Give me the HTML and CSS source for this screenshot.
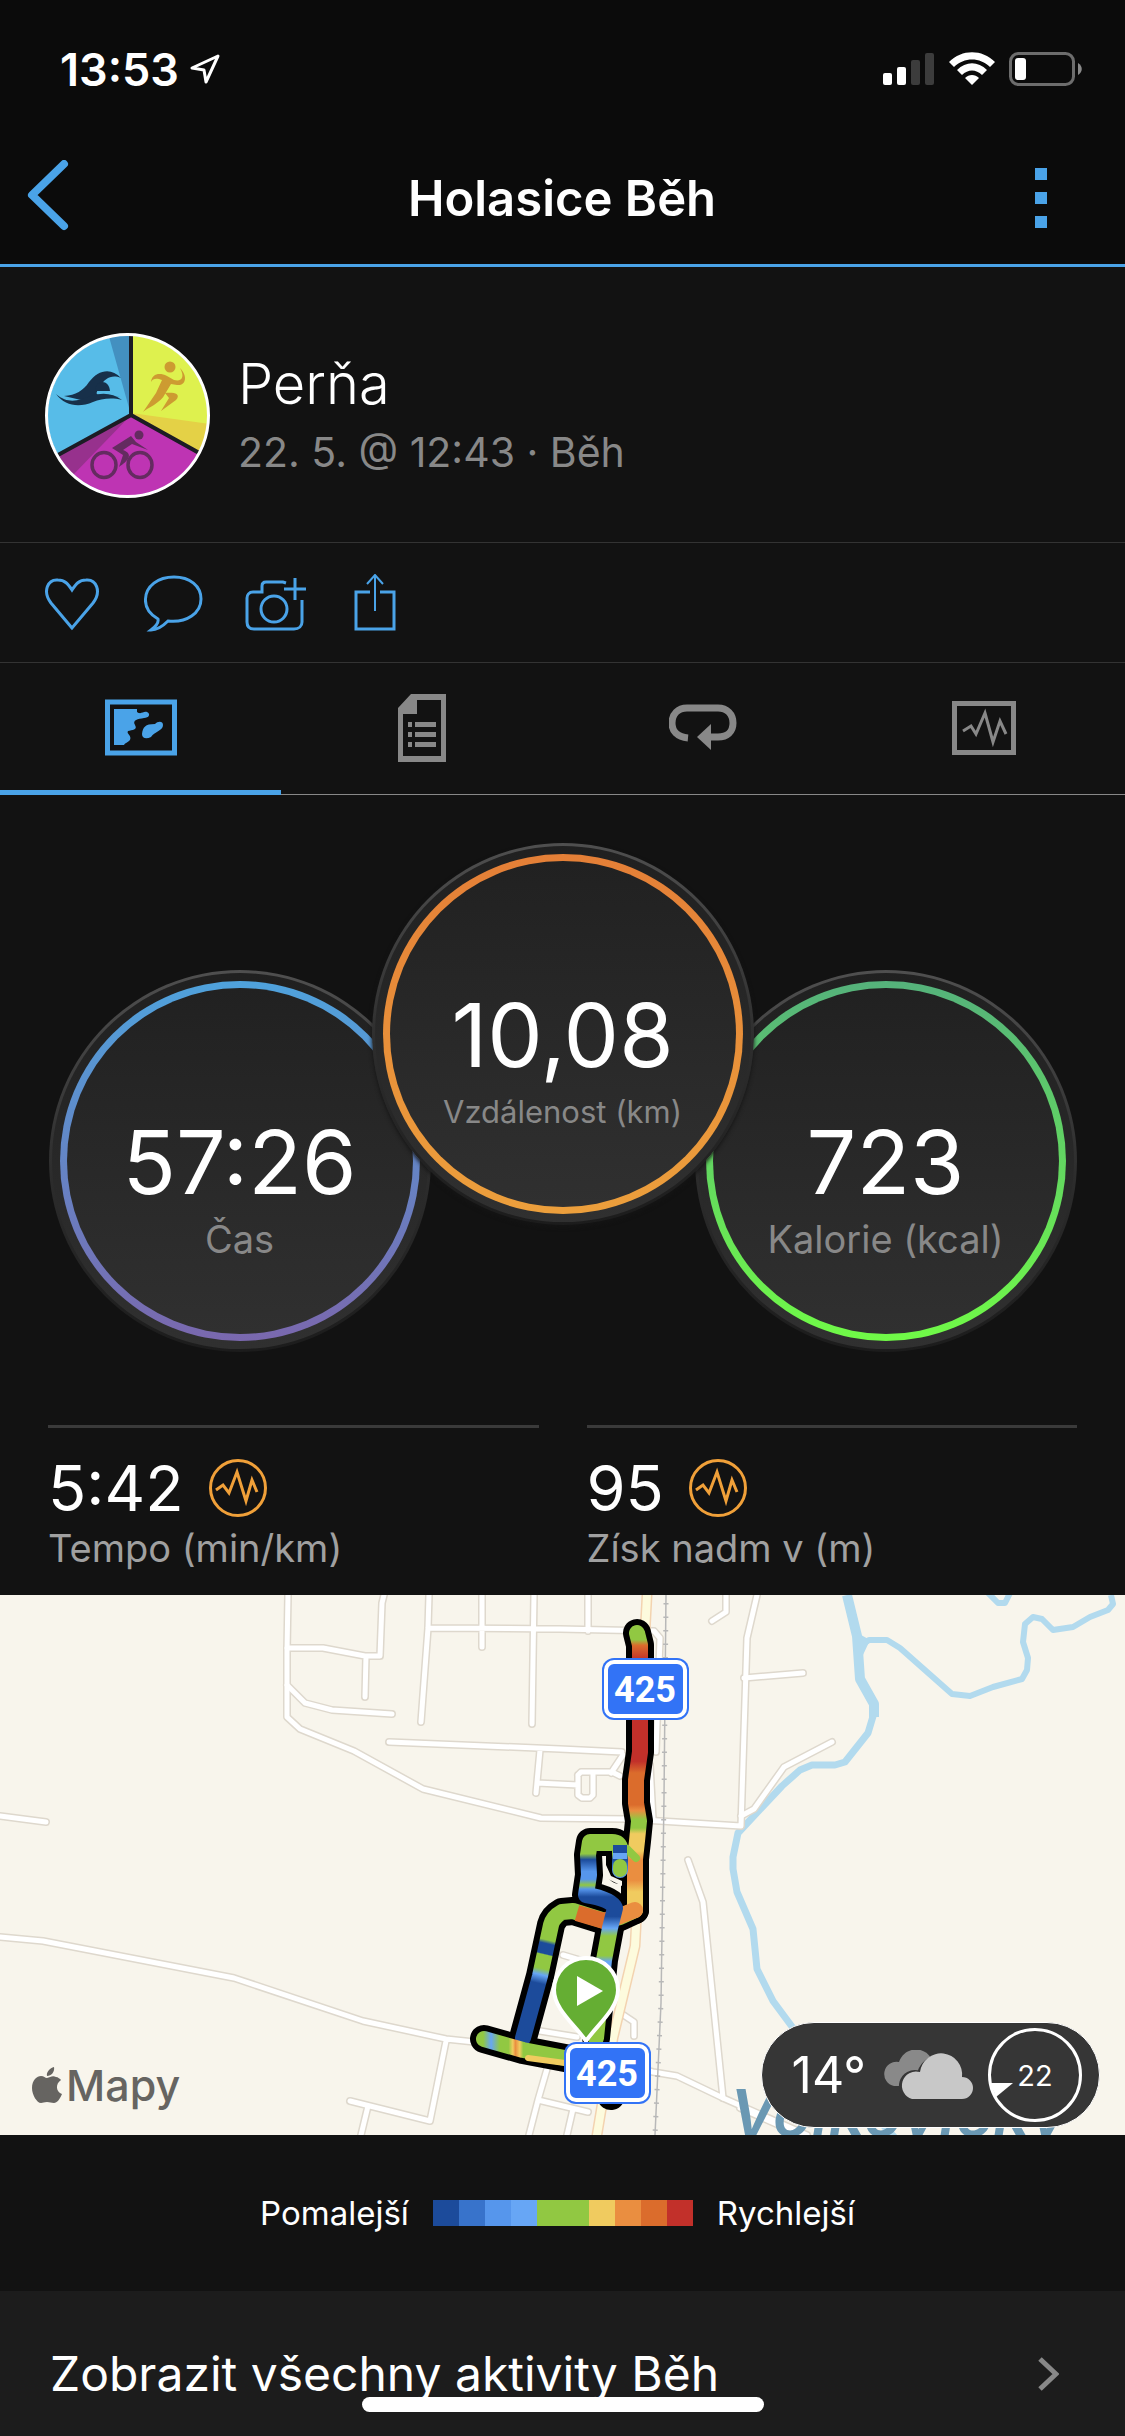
FILE: index.html
```html
<!DOCTYPE html>
<html lang="cs">
<head>
    <meta charset="UTF-8">
    <meta name="viewport" content="width=device-width, initial-scale=1.0">
    <title>Holasice Běh</title>
    <link rel="stylesheet" href="styles.css">
</head>
<body>
    <header class="top">
        <div class="status-bar">
            <span class="clock">13:53</span>
            <svg class="location" width="32" height="32" viewBox="0 0 32 32"><path d="M29 3 L3 15 L15 17 L17 29 Z"/></svg>
            <div class="status-icons">
                <svg width="52" height="34" viewBox="0 0 52 34">
                    <rect x="0" y="21" width="9" height="12" rx="2" fill="#fff"/>
                    <rect x="14" y="15" width="9" height="18" rx="2" fill="#fff"/>
                    <rect x="28" y="8" width="9" height="25" rx="2" fill="#3c3c3c"/>
                    <rect x="42" y="1" width="9" height="32" rx="2" fill="#3c3c3c"/>
                </svg>
                <svg width="46" height="34" viewBox="0 0 46 34" fill="#fff">
                    <path d="M0 10 C13 -3 33 -3 46 10 L41 15 C31 5 15 5 5 15 Z"/>
                    <path d="M8 18 C17 9 29 9 38 18 L33 23 C27 17 19 17 13 23 Z"/>
                    <path d="M16 26 C20 22 26 22 30 26 L23 33 Z"/>
                </svg>
                <svg width="73" height="34" viewBox="0 0 73 34">
                    <rect x="1.500" y="1.500" width="63" height="31" rx="8" fill="none" stroke="#6d6d6d" stroke-width="3"/>
                    <rect x="6" y="6" width="11" height="22" rx="3" fill="#fff"/>
                    <path d="M69 11 C74 14 74 20 69 23 Z" fill="#8a8a8a"/>
                </svg>
            </div>
        </div>
        <nav class="nav-bar">
            <button class="icon-button" aria-label="Zpět">
                <svg width="42" height="76" viewBox="0 0 42 76"><path d="M37 4 L5 35 L37 66" fill="none" stroke="#4aa3e8" stroke-width="8" stroke-linecap="round" stroke-linejoin="round"/></svg>
            </button>
            <h1>Holasice Běh</h1>
            <button class="icon-button more" aria-label="Více">
                <svg width="12" height="60" viewBox="0 0 12 60" fill="#4aa3e8"><path d="M0 0h12v12H0zM0 24h12v12H0zM0 48h12v12H0z"/></svg>
            </button>
        </nav>
    </header>

    <section class="profile">
        <svg class="avatar" viewBox="0 0 165 165">
            <defs><clipPath id="disc"><circle cx="82.500" cy="82.500" r="80"/></clipPath></defs>
            <g clip-path="url(#disc)">
                <rect width="165" height="165" fill="#57bce8"/>
                <path d="M63 0 H86 V82 Z" fill="#4390c0"/>
                <path d="M86 82 V0 H165 V125 Z" fill="#def14e"/>
                <path d="M86 80 L165 91 V127 Z" fill="#e4d146"/>
                <path d="M86 82 L0 130 V165 H165 V127 Z" fill="#be34b3"/>
                <path d="M86 82 L0 130 L28 142 Z" fill="#97318d"/>
                <path d="M86 0 V82 L0 129 M86 82 L165 126" fill="none" stroke="#1c1c24" stroke-width="4"/>
            </g>
            <g fill="#17304a">
                <path d="M19 63 C31 62 38 58 44 49 C53 37 66 34 76 45 C66 41 60 46 55 53 C51 60 48 63 62 63 L75 63 L56 64 L36 67 Z"/>
                <path d="M50 58 C51 46 64 46 65 58 Z"/>
                <path d="M11 61 C24 72 34 67 46 63 C57 59 68 60 77 67 C66 64 56 66 48 69 C34 75 20 73 11 61 Z"/>
            </g>
            <g fill="#cd9b31">
                <circle cx="125" cy="34" r="5.500"/>
                <path d="M106 49 C107 41 114 39 122 43 L129 47 C137 49 140 44 135 35 C143 43 141 53 132 52 L126 51 L120 61 C116 70 102 75 98 79 L111 60 L117 47 C112 45 108 45 106 49 Z"/>
                <path d="M120 60 C127 59 137 60 131 67 L116 78 L124 65 Z"/>
            </g>
            <g fill="none" stroke="#642b60" stroke-width="3.500">
                <ellipse cx="59" cy="132" rx="12" ry="12.500"/>
                <ellipse cx="95" cy="132" rx="12" ry="12.500"/>
            </g>
            <g fill="#642b60">
                <circle cx="94" cy="102" r="4.500"/>
                <path d="M67 115 L86 103 L91 109 L103 117 L87 111 L78 117 C89 121 83 128 74 134 L78 122 Z"/>
            </g>
            <circle cx="82.500" cy="82.500" r="81" fill="none" stroke="#fff" stroke-width="3"/>
        </svg>
        <div class="profile-text">
            <h2>Perňa</h2>
            <p>22. 5. @ 12:43 · Běh</p>
        </div>
    </section>

    <div class="actions">
        <button class="icon-button" aria-label="To se mi líbí">
            <svg width="57" height="58" viewBox="0 0 57 58"><path d="M27 54 L6 29 C-3 17 3 5 13 6 C20 6 23 10 27 16 C31 10 34 6 41 6 C51 5 57 17 48 29 Z"/></svg>
        </button>
        <button class="icon-button" aria-label="Komentář">
            <svg width="59" height="58" viewBox="0 0 59 58"><path d="M14 45 C5 40 1 33 1.500 25 C2 12 14 3 30 3 C46 3 57 12 57 25 C57 39 43 49 24 47 C20 51 14 56 7 56 C11 53 15 49 14 45 Z"/></svg>
        </button>
        <button class="icon-button" aria-label="Přidat fotku">
            <svg width="61" height="58" viewBox="0 0 61 58"><path d="M41 9 L38 8 H21 C18 8 17 10 17 12 V18 H8 C4 18 2 21 2 24 V48 C2 53 5 55 9 55 H49 C54 55 57 52 57 48 V26"/><circle cx="29" cy="35" r="13"/><path d="M50 4 V26 M39 15 H61"/></svg>
        </button>
        <button class="icon-button" aria-label="Sdílet">
            <svg width="54" height="58" viewBox="0 0 54 58"><path d="M22 18 H8 V55 H46 V18 H32"/><path d="M27 1 V37 M19 10 L27 1 L35 10" stroke-width="2"/></svg>
        </button>
    </div>

    <div class="tabs" role="tablist">
        <button class="tab active" role="tab" aria-selected="true" aria-label="Mapa">
            <svg width="72" height="57" viewBox="0 0 72 57" fill="#4aa3e8">
                <rect x="2.500" y="3" width="67" height="51" fill="none" stroke="#4aa3e8" stroke-width="5"/>
                <path d="M9 10 H32 V13 C36 16 38 12 42 13 C46 15 44 19 39 19 C33 20 27 21 30 26 C33 31 27 31 23 32 C21 35 27 36 25 41 C21 45 21 43 19 46 H9 Z"/>
                <path d="M50 25 C53 22 58 22 58 26 C58 32 50 32 46 38 C42 40 37 40 37 35 C38 28 40 25 50 25 Z"/>
            </svg>
        </button>
        <button class="tab" role="tab" aria-selected="false" aria-label="Podrobnosti">
            <svg width="48" height="68" viewBox="0 0 48 68" fill="#888">
                <path fill-rule="evenodd" d="M13 0 H48 V68 H0 V14 Z M19 6 V20 H5 V62 H43 V6 Z"/>
                <path d="M10 28h4v5h-4zM17 28h21v5H17zM10 38h4v5h-4zM17 38h21v5H17zM10 48h4v5h-4zM17 48h21v5H17z"/>
            </svg>
        </button>
        <button class="tab" role="tab" aria-selected="false" aria-label="Okruhy">
            <svg width="68" height="47" viewBox="0 0 68 47"><path d="M19 34 C8 33 3 27 3 19 C3 10 9 4 18 4 H49 C58 4 64 10 64 19 C64 28 58 33 49 33 H40" fill="none" stroke="#888" stroke-width="7"/><path d="M42 20 L28 33 L42 46 Z" fill="#888"/></svg>
        </button>
        <button class="tab" role="tab" aria-selected="false" aria-label="Grafy">
            <svg width="64" height="54" viewBox="0 0 64 54" fill="none" stroke="#888"><rect x="2.500" y="2.500" width="59" height="49" stroke-width="5"/><path d="M11 30 L19 25 L24 33 L33 12 L41 41 L48 20 L54 33" stroke-width="3"/></svg>
        </button>
    </div>

    <section class="dials">
        <div class="dial time">
            <div class="ring"><strong>57:26</strong><span>Čas</span></div>
        </div>
        <div class="dial distance">
            <div class="ring"><strong>10,08</strong><span>Vzdálenost (km)</span></div>
        </div>
        <div class="dial calories">
            <div class="ring"><strong>723</strong><span>Kalorie (kcal)</span></div>
        </div>
    </section>

    <section class="stats">
        <div class="stat">
            <div class="stat-value">5:42
                <svg width="58" height="58" viewBox="0 0 58 58"><circle cx="29" cy="29" r="27.500"/><path d="M7 31 L14 26 L20 34 L28 13 L37 42 L43 21 L48 33"/></svg>
            </div>
            <p>Tempo (min/km)</p>
        </div>
        <div class="stat">
            <div class="stat-value">95
                <svg width="58" height="58" viewBox="0 0 58 58"><circle cx="29" cy="29" r="27.500"/><path d="M7 31 L14 26 L20 34 L28 13 L37 42 L43 21 L48 33"/></svg>
            </div>
            <p>Získ nadm v (m)</p>
        </div>
    </section>

    <section class="map">
        <svg class="map-canvas" viewBox="0 0 1125 540">
            <defs>
                <g id="roads">
                    <path d="M288 0 L287 56 V122 L300 134 L354 156 L423 194 L541 223 L627 224 L741 231 L747 43 L757 0"/>
                    <path d="M287 53 H323 L365 61 H380 L382 8 L384 0 M366 61 L365 102 M287 90 L305 108 L332 115 L392 119"/>
                    <path d="M429 0 L428 33 L421 127 M428 33 L560 34 L654 36 L660 43 L656 157 M482 0 V52 M534 0 L532 129 M588 0 V36"/>
                    <path d="M389 147 L560 154 L622 157 M540 155 L536 198 M537 188 L578 190 M578 180 L581 177 H612 L620 181 M578 180 V200 L582 203 H590 L593 200 V178 M611 178 L623 160"/>
                    <path d="M0 221 L46 227 M0 342 L43 346 L234 383 L363 426 L446 444 L577 458 L653 477 L677 481 L723 503 L807 540 M740 513 L790 535 M446 446 L430 526 L350 506 M368 511 L361 540"/>
                    <path d="M547 474 L538 505 L529 540 M538 505 L588 517 M573 514 L567 540 M688 265 L703 307 L723 503 M744 83 L803 78 M741 221 L754 214 L784 172 L832 147 M726 0 V17 L712 26"/>
                    <path d="M563 360 L593 369 M540 436 L577 442 M622 419 L634 427 V441 M650 170 L653 224"/>
                </g>
                <path id="highway" d="M647 0 L640 133 L636 332 L635 351 L613 443 L597 540"/>
                <path id="north" d="M637 38 L640 50 V157 L636 185 L636 208 L639 226 L637 246 L635 264 V315"/>
                <path id="middle" d="M635 315 L620 322 L605 326 L573 316 L562 317 Q553 322 551 330 L540 381 L523 443"/>
                <path id="loop" d="M620 275 V254 Q620 247 612 247 H590 L588 260 L589 280 L586 300 Q611 304 615 313 L610 333 L604 365 L596 443"/>
                <path id="south" d="M484 444 L523 455 L565 463 L605 471"/>
                <linearGradient id="pace-north" gradientUnits="userSpaceOnUse" x1="0" y1="30" x2="0" y2="320">
                    <stop offset=".05" stop-color="#91c842"/><stop offset=".07" stop-color="#db6c2c"/><stop offset=".12" stop-color="#c2302a"/>
                    <stop offset=".47" stop-color="#c2302a"/><stop offset=".51" stop-color="#db6c2c"/><stop offset=".62" stop-color="#db6c2c"/>
                    <stop offset=".64" stop-color="#ea8e40"/><stop offset=".67" stop-color="#91c842"/><stop offset=".7" stop-color="#91c842"/>
                    <stop offset=".72" stop-color="#f0cb5f"/><stop offset=".78" stop-color="#f0cb5f"/><stop offset=".81" stop-color="#ea8e40"/>
                    <stop offset=".88" stop-color="#ea8e40"/><stop offset=".92" stop-color="#f0cb5f"/><stop offset=".97" stop-color="#f0cb5f"/><stop offset="1" stop-color="#ea8e40"/>
                </linearGradient>
                <linearGradient id="pace-west" gradientUnits="userSpaceOnUse" x1="552" y1="320" x2="523" y2="443">
                    <stop offset="0" stop-color="#91c842"/><stop offset=".2" stop-color="#91c842"/><stop offset=".23" stop-color="#1c4b9b"/>
                    <stop offset=".31" stop-color="#1c4b9b"/><stop offset=".32" stop-color="#91c842"/><stop offset=".43" stop-color="#91c842"/>
                    <stop offset=".48" stop-color="#67a6f5"/><stop offset=".55" stop-color="#1c4b9b"/><stop offset="1" stop-color="#1c4b9b"/>
                </linearGradient>
                <linearGradient id="pace-loop" gradientUnits="userSpaceOnUse" x1="0" y1="247" x2="0" y2="443">
                    <stop offset="0" stop-color="#91c842"/><stop offset=".06" stop-color="#91c842"/><stop offset=".09" stop-color="#1c4b9b"/>
                    <stop offset=".15" stop-color="#5696ec"/><stop offset=".19" stop-color="#5696ec"/><stop offset=".22" stop-color="#91c842"/>
                    <stop offset=".24" stop-color="#5696ec"/><stop offset=".28" stop-color="#1c4b9b"/><stop offset=".38" stop-color="#1c4b9b"/>
                    <stop offset=".44" stop-color="#67a6f5"/><stop offset=".48" stop-color="#91c842"/><stop offset=".58" stop-color="#91c842"/>
                    <stop offset=".61" stop-color="#67a6f5"/><stop offset=".8" stop-color="#67a6f5"/><stop offset=".9" stop-color="#91c842"/>
                </linearGradient>
                <linearGradient id="pace-south" gradientUnits="userSpaceOnUse" x1="478" y1="0" x2="565" y2="0">
                    <stop offset=".06" stop-color="#91c842"/><stop offset=".15" stop-color="#67a6f5"/><stop offset=".25" stop-color="#91c842"/>
                    <stop offset=".35" stop-color="#91c842"/><stop offset=".4" stop-color="#f0cb5f"/><stop offset=".43" stop-color="#ea8e40"/>
                    <stop offset=".48" stop-color="#f0cb5f"/><stop offset=".52" stop-color="#91c842"/>
                </linearGradient>
                <g id="shield">
                    <rect width="87" height="62" rx="12" fill="#3273f6"/>
                    <rect x="4" y="4" width="79" height="54" rx="8" fill="#3273f6" stroke="#fff" stroke-width="4"/>
                </g>
            </defs>
            <rect width="1125" height="540" fill="#f8f5ec"/>
            <g fill="none" stroke="#b2daee" stroke-linejoin="round">
                <path stroke-width="7" d="M874 118 L868 138 L845 167 L835 170 H812 L800 175 L782 191 L738 238 L733 262 V274 L737 297 L753 334 L757 374 L773 406 L793 433 L897 545"/>
                <path stroke-width="10" d="M847 0 L857 41 L860 84 L874 109 V122"/>
                <path stroke-width="6" d="M860 51 L869 45 H887 L900 53 L952 99 L970 101 L993 92 L1022 84 L1027 75 L1028 63 L1023 47 L1025 29 L1033 22 L1042 24 L1053 35 L1073 32 L1090 22 L1108 15 L1113 9 L1111 0 M988 -2 L998 8 H1005 L1010 -2"/>
            </g>
            <path d="M854 36 L870 45 L863 60 L858 60 Z" fill="#b2daee"/>
            <g fill="none" stroke-linecap="round" stroke-linejoin="round">
                <use href="#roads" stroke="#ded8cd" stroke-width="8"/>
                <use href="#roads" stroke="#fff" stroke-width="5"/>
                <use href="#highway" stroke="#f3d3b0" stroke-width="11"/>
                <use href="#highway" stroke="#fdfbdd" stroke-width="8"/>
            </g>
            <g fill="none" stroke="#b8b8b8">
                <path d="M666 0 L664 202 L661 408 L655 540" stroke-width="1.500"/>
                <path d="M666 8 L664 202 L661 408 L655 540" stroke-width="5" stroke-dasharray="1.500 12"/>
            </g>
            <g fill="none" stroke="#000" stroke-width="28" stroke-linecap="round" stroke-linejoin="round">
                <use href="#north"/><use href="#middle"/><use href="#loop"/><use href="#south"/>
                <path d="M605 471 L611 501"/>
            </g>
            <path d="M606 270 L611 281 L622 286 V291 L606 283 Z" fill="#f8f5ec"/>
            <g fill="none" stroke-width="16" stroke-linecap="round" stroke-linejoin="round">
                <use href="#middle" stroke="url(#pace-west)"/>
                <use href="#north" stroke="url(#pace-north)"/>
                <path d="M627 254 L636 263" stroke="#91c842" stroke-width="8"/>
                <path d="M635 315 L615 323" stroke="#ea8e40"/>
                <path d="M612 323 L604 326 L577 318" stroke="#db6c2c" stroke-linecap="butt"/>
                <use href="#loop" stroke="url(#pace-loop)"/>
                <path d="M597 248 H611" stroke="#91c842"/>
                <path d="M620 250 V258" stroke="#1c4b9b" stroke-width="14" stroke-linecap="butt"/>
                <path d="M620 258 V264" stroke="#67a6f5" stroke-width="14" stroke-linecap="butt"/>
                <path d="M620 275 V271" stroke="#91c842" stroke-width="14"/>
                <use href="#south" stroke="url(#pace-south)"/>
                <path d="M528 463 L565 468" stroke="#f0cb5f" stroke-width="6"/>
            </g>
            <path d="M586 446 C575 430 554 414 554 395 A32 32 0 0 1 618 395 C618 414 597 430 586 446 Z" fill="#65ae33" stroke="#fff" stroke-width="4"/>
            <path d="M577 381 L603 396 L577 411 Z" fill="#fff"/>
            <use href="#shield" x="602" y="63"/>
            <use href="#shield" x="564" y="447"/>
            <g class="shield-text">
                <text x="645" y="107">425</text>
                <text x="607" y="491">425</text>
            </g>
            <text class="water-label" x="730" y="541">Vojkovický</text>
        </svg>
        <div class="map-brand">
            <svg width="30" height="37" viewBox="0 0 30 37" fill="#666461">
                <path d="M22 0 C23 5 19 9 15 9 C14 5 18 1 22 0 Z"/>
                <path d="M15 11 C18 10 21 8 24 10 C26 10 28 12 29 13 C23 17 24 25 30 27 C28 32 25 36 22 36 C19 36 18 35 15 35 C12 35 11 36 9 36 C5 36 0 28 0 21 C0 13 5 9 9 9 C12 9 13 11 15 11 Z"/>
            </svg>
            <span>Mapy</span>
        </div>
        <div class="weather">
            <span class="temperature">14°</span>
            <svg width="94" height="50" viewBox="0 0 94 50">
                <path d="M14 36 A12 12 0 0 1 19 12 C25 -4 44 -4 51 8 L40 36 Z" fill="#898989"/>
                <path d="M31 50 A14 14 0 0 1 39 22 A22 22 0 0 1 82 27 A11 11 0 0 1 82 50 Z" fill="#363636" stroke="#363636" stroke-width="3"/>
                <path d="M32 49 A13 13 0 0 1 40 22 A21 21 0 0 1 82 27 A11 11 0 0 1 82 49 Z" fill="#c8c8c8"/>
            </svg>
            <div class="wind">
                <svg width="94" height="94" viewBox="0 0 94 94"><circle cx="47" cy="47" r="45.500" fill="none" stroke="#fff" stroke-width="3"/><path d="M2 55 H25 L8 69 Z" fill="#fff"/></svg>
                <span>22</span>
            </div>
        </div>
    </section>

    <div class="legend">
        <span>Pomalejší</span>
        <div class="scale">
            <i class="pace-1"></i><i class="pace-2"></i><i class="pace-3"></i><i class="pace-4"></i><i class="pace-5"></i>
            <i class="pace-5"></i><i class="pace-6"></i><i class="pace-7"></i><i class="pace-8"></i><i class="pace-9"></i>
        </div>
        <span>Rychlejší</span>
    </div>

    <a class="all-activities" href="#">
        <span>Zobrazit všechny aktivity Běh</span>
        <svg width="22" height="34" viewBox="0 0 22 34"><path d="M3 2 L19 17 L3 32" fill="none" stroke="#888" stroke-width="5"/></svg>
    </a>
    <div class="home-indicator"></div>
</body>
</html>
```
FILE: styles.css
```css
* {
    box-sizing: border-box;
}
body {
    margin: 0;
    background-color: #121212;
    color: #fff;
    font-family: Inter, "Liberation Sans", sans-serif;
}
h1, h2, p {
    margin: 0;
}
svg {
    display: block;
}
button {
    padding: 0;
    background: none;
    border: none;
    cursor: pointer;
}

/* status bar + navigation */
.top {
    background-color: #0b0b0b;
    border-bottom: 3px solid #4aa3e8;
}
.status-bar {
    display: flex;
    align-items: center;
    height: 132px;
    padding: 6px 43px 0 60px;
}
.clock {
    font-size: 45px;
    font-weight: 600;
}
.location {
    margin-left: 10px;
    fill: none;
    stroke: #fff;
    stroke-width: 3;
    stroke-linejoin: round;
}
.status-icons {
    display: flex;
    gap: 14px;
    margin-left: auto;
}
.nav-bar {
    display: grid;
    grid-template-columns: 1fr auto 1fr;
    align-items: center;
    height: 132px;
    padding: 0 78px 0 27px;
}
.nav-bar .icon-button {
    justify-self: start;
}
.nav-bar .more {
    justify-self: end;
}
.nav-bar h1 {
    padding-left: 50px;
    font-size: 49px;
    font-weight: 600;
}

/* profile */
.profile {
    display: flex;
    align-items: center;
    gap: 28px;
    padding: 66px 45px 44px;
    border-bottom: 1px solid #333;
}
.avatar {
    width: 165px;
    height: 165px;
}
.profile-text {
    padding-bottom: 8px;
}
.profile h2 {
    font-size: 56px;
    font-weight: 300;
    line-height: 80px;
}
.profile p {
    color: #888;
    font-size: 41px;
    line-height: 56px;
}
.actions {
    display: flex;
    align-items: center;
    gap: 42px;
    height: 120px;
    padding: 0 45px;
    border-bottom: 1px solid #333;
}
.actions svg {
    fill: none;
    stroke: #4aa3e8;
    stroke-width: 3;
}

/* tabs */
.tabs {
    display: grid;
    grid-template-columns: repeat(4, 1fr);
}
.tab {
    display: flex;
    align-items: center;
    justify-content: center;
    height: 132px;
    padding-bottom: 3px;
    box-shadow: inset 0 -1px #888;
}
.tab.active {
    box-shadow: inset 0 -5px #4aa3e8;
}

/* dials */
.dials {
    display: flex;
    justify-content: center;
    padding: 48px 0 73px;
}
.dial {
    width: 382px;
    height: 382px;
    margin-top: 127px;
    padding: 8px;
    border: 3px solid transparent;
    border-radius: 50%;
    background: linear-gradient(#202020, #303030) padding-box, linear-gradient(#4f4f4f, #2c2c2c 55%, #1c1c1c) border-box;
}
.distance {
    z-index: 1;
    margin: 0 -59px;
    box-shadow: 0 2px 4px #151515;
}
.ring {
    display: flex;
    flex-direction: column;
    align-items: center;
    height: 100%;
    padding-top: 122px;
    border: 7px solid transparent;
    border-radius: 50%;
}
.time .ring {
    background: linear-gradient(#212121, #303030) padding-box, linear-gradient(#4fa2dc, #7a68ae) border-box;
}
.distance .ring {
    background: linear-gradient(#212121, #303030) padding-box, linear-gradient(#e47f37, #ec9f3c) border-box;
}
.calories .ring {
    background: linear-gradient(#212121, #303030) padding-box, linear-gradient(#55b27b, #70fa47) border-box;
}
.ring strong {
    font-size: 88px;
    font-weight: 400;
    line-height: 104px;
}
.ring span {
    color: #888;
    font-size: 38px;
    line-height: 50px;
}
.distance span {
    font-size: 31px;
}

/* stats */
.stats {
    display: grid;
    grid-template-columns: 1fr 1fr;
    gap: 48px;
    padding: 0 48px 23px;
}
.stat {
    padding-top: 24px;
    border-top: 3px solid #3a3a3a;
}
.stat-value {
    display: flex;
    align-items: center;
    gap: 25px;
    font-size: 63px;
    line-height: 72px;
}
.stat-value svg {
    fill: none;
    stroke: #f0a039;
    stroke-width: 3;
}
.stat p {
    color: #a0a0a0;
    font-size: 38px;
    line-height: 48px;
}

/* map */
.map {
    position: relative;
}
.map-canvas {
    width: 100%;
}
.shield-text {
    fill: #fff;
    font-family: Roboto, sans-serif;
    font-size: 36px;
    font-weight: 700;
    text-anchor: middle;
}
.water-label {
    fill: #6a98b3;
    font-size: 64px;
    font-style: italic;
    font-weight: 600;
}
.map-brand {
    position: absolute;
    bottom: 24px;
    left: 32px;
    display: flex;
    align-items: center;
    gap: 4px;
    color: #666461;
    font-size: 43px;
    font-weight: 500;
}
.weather {
    position: absolute;
    right: 25px;
    bottom: 7px;
    display: flex;
    align-items: center;
    gap: 14px;
    padding: 5px 17px 5px 30px;
    border: 1px solid #fff;
    border-radius: 54px;
    background-color: #363636;
}
.temperature {
    font-size: 50px;
}
.wind {
    display: grid;
    place-items: center;
}
.wind svg, .wind span {
    grid-area: 1 / 1;
}
.wind span {
    font-size: 29px;
}

/* legend */
.legend {
    display: flex;
    align-items: center;
    justify-content: center;
    gap: 24px;
    height: 156px;
    padding-right: 10px;
    font-size: 33px;
}
.scale {
    display: flex;
}
.scale i {
    width: 26px;
    height: 26px;
}
.pace-1 { background-color: #1c4b9b; }
.pace-2 { background-color: #3873cb; }
.pace-3 { background-color: #5696ec; }
.pace-4 { background-color: #67a6f5; }
.pace-5 { background-color: #91c842; }
.pace-6 { background-color: #f0cb5f; }
.pace-7 { background-color: #ea8e40; }
.pace-8 { background-color: #db6c2c; }
.pace-9 { background-color: #c2302a; }

.all-activities {
    display: flex;
    align-items: center;
    justify-content: space-between;
    padding: 47px 66px 26px 50px;
    background-color: #1c1c1c;
    color: #fff;
    font-size: 48px;
    line-height: 72px;
    text-decoration: none;
}
.home-indicator {
    position: fixed;
    bottom: 24px;
    left: 50%;
    width: 402px;
    height: 15px;
    margin-left: -201px;
    border-radius: 8px;
    background-color: #fff;
}
```
